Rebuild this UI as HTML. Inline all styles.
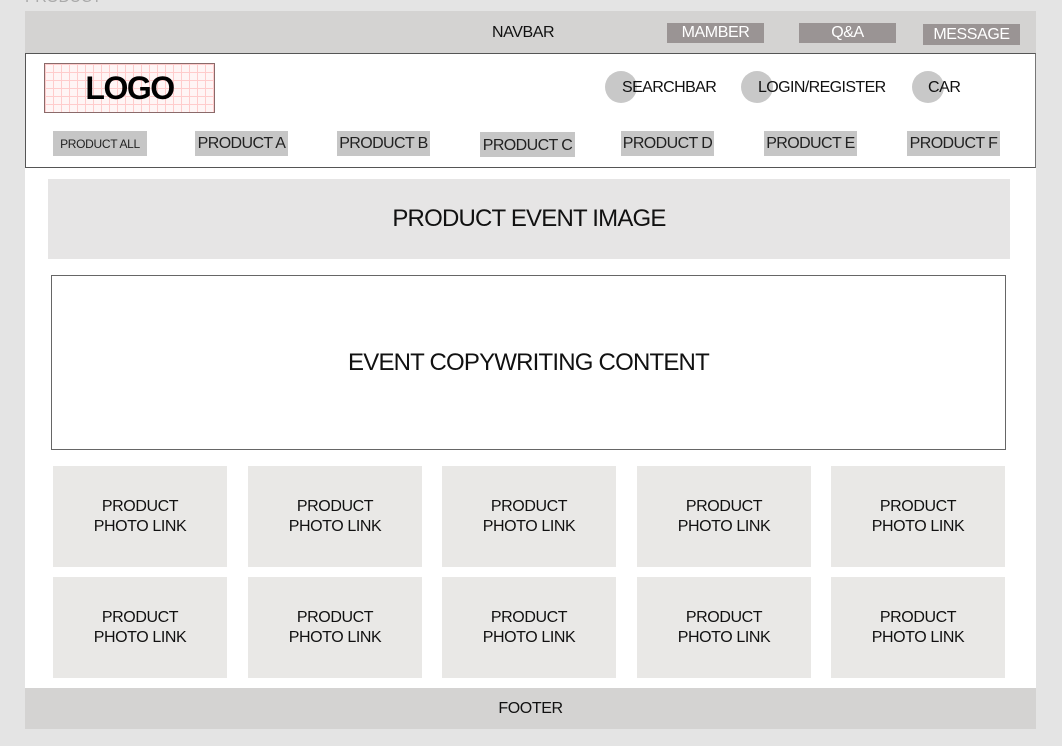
<!DOCTYPE html>
<html><head><style>
*{margin:0;padding:0;box-sizing:border-box}
body{width:1062px;height:746px;background:#e4e4e4;font-family:"Liberation Sans",sans-serif;position:relative;overflow:hidden;color:#111;letter-spacing:-0.4px}
.a{position:absolute;white-space:nowrap}
.c{display:flex;align-items:center;justify-content:center;text-align:center}
.tb{background:#9a9494;color:#fff;font-size:16px}
.tab{background:#c6c6c6;font-size:16px;color:#222;letter-spacing:-0.6px}
.circ{border-radius:50%;background:#c8c8c8;width:32px;height:32px}
.cell{background:#e9e8e6;font-size:16px;line-height:20px;width:174px;white-space:normal}
.logo{background-color:#fff5f5;background-image:linear-gradient(#fcc 1px,transparent 1px),linear-gradient(90deg,#fcc 1px,transparent 1px);background-size:8px 8px;border:1px solid #8a6a6a}
</style></head><body>
<div class="a" style="left:25px;top:-11px;font-size:16px;color:#aaa">PRODUCT</div>
<div class="a" style="left:25px;top:11px;width:1011px;height:718px;background:#fff"></div>
<div class="a" style="left:25px;top:11px;width:1011px;height:43px;background:#d4d3d2"></div>
<div class="a" style="left:492px;top:24px;font-size:16px">NAVBAR</div>
<div class="a c tb" style="left:667px;top:23px;width:97px;height:20px">MAMBER</div>
<div class="a c tb" style="left:799px;top:23px;width:97px;height:20px">Q&amp;A</div>
<div class="a c tb" style="left:923px;top:24px;width:97px;height:21px">MESSAGE</div>
<div class="a" style="left:25px;top:53px;width:1011px;height:115px;border:1px solid #555;border-right-color:#777"></div>
<div class="a c logo" style="left:44px;top:63px;width:171px;height:50px;font-weight:bold;font-size:32px;color:#000;letter-spacing:-1.5px">LOGO</div>
<div class="a circ" style="left:605px;top:71px"></div>
<div class="a circ" style="left:741px;top:71px"></div>
<div class="a circ" style="left:912px;top:71px"></div>
<div class="a" style="left:622px;top:79px;font-size:16px;letter-spacing:-0.6px">SEARCHBAR</div>
<div class="a" style="left:758px;top:79px;font-size:16px;letter-spacing:-0.6px">LOGIN/REGISTER</div>
<div class="a" style="left:928px;top:79px;font-size:16px">CAR</div>
<div class="a c tab" style="left:53px;top:131px;width:94px;height:25px;font-size:12px;letter-spacing:-0.3px">PRODUCT ALL</div>
<div class="a c tab" style="left:195px;top:131px;width:93px;height:25px">PRODUCT A</div>
<div class="a c tab" style="left:337px;top:131px;width:93px;height:25px">PRODUCT B</div>
<div class="a c tab" style="left:480px;top:132px;width:95px;height:25px;padding-top:3px">PRODUCT C</div>
<div class="a c tab" style="left:621px;top:131px;width:93px;height:25px">PRODUCT D</div>
<div class="a c tab" style="left:764px;top:131px;width:93px;height:25px">PRODUCT E</div>
<div class="a c tab" style="left:907px;top:131px;width:93px;height:25px">PRODUCT F</div>
<div class="a c" style="left:48px;top:179px;width:962px;height:80px;background:#e6e5e5;font-size:24px;letter-spacing:-0.8px">PRODUCT EVENT IMAGE</div>
<div class="a c" style="left:51px;top:275px;width:955px;height:175px;border:1px solid #666;font-size:24px;letter-spacing:-0.8px">EVENT COPYWRITING CONTENT</div>
<div class="a c cell" style="left:53px;top:466px;height:101px">PRODUCT<br>PHOTO LINK</div>
<div class="a c cell" style="left:248px;top:466px;height:101px">PRODUCT<br>PHOTO LINK</div>
<div class="a c cell" style="left:442px;top:466px;height:101px">PRODUCT<br>PHOTO LINK</div>
<div class="a c cell" style="left:637px;top:466px;height:101px">PRODUCT<br>PHOTO LINK</div>
<div class="a c cell" style="left:831px;top:466px;height:101px">PRODUCT<br>PHOTO LINK</div>
<div class="a c cell" style="left:53px;top:577px;height:101px">PRODUCT<br>PHOTO LINK</div>
<div class="a c cell" style="left:248px;top:577px;height:101px">PRODUCT<br>PHOTO LINK</div>
<div class="a c cell" style="left:442px;top:577px;height:101px">PRODUCT<br>PHOTO LINK</div>
<div class="a c cell" style="left:637px;top:577px;height:101px">PRODUCT<br>PHOTO LINK</div>
<div class="a c cell" style="left:831px;top:577px;height:101px">PRODUCT<br>PHOTO LINK</div>
<div class="a c" style="left:25px;top:688px;width:1011px;height:41px;background:#d4d3d2;font-size:16px">FOOTER</div>
</body></html>
